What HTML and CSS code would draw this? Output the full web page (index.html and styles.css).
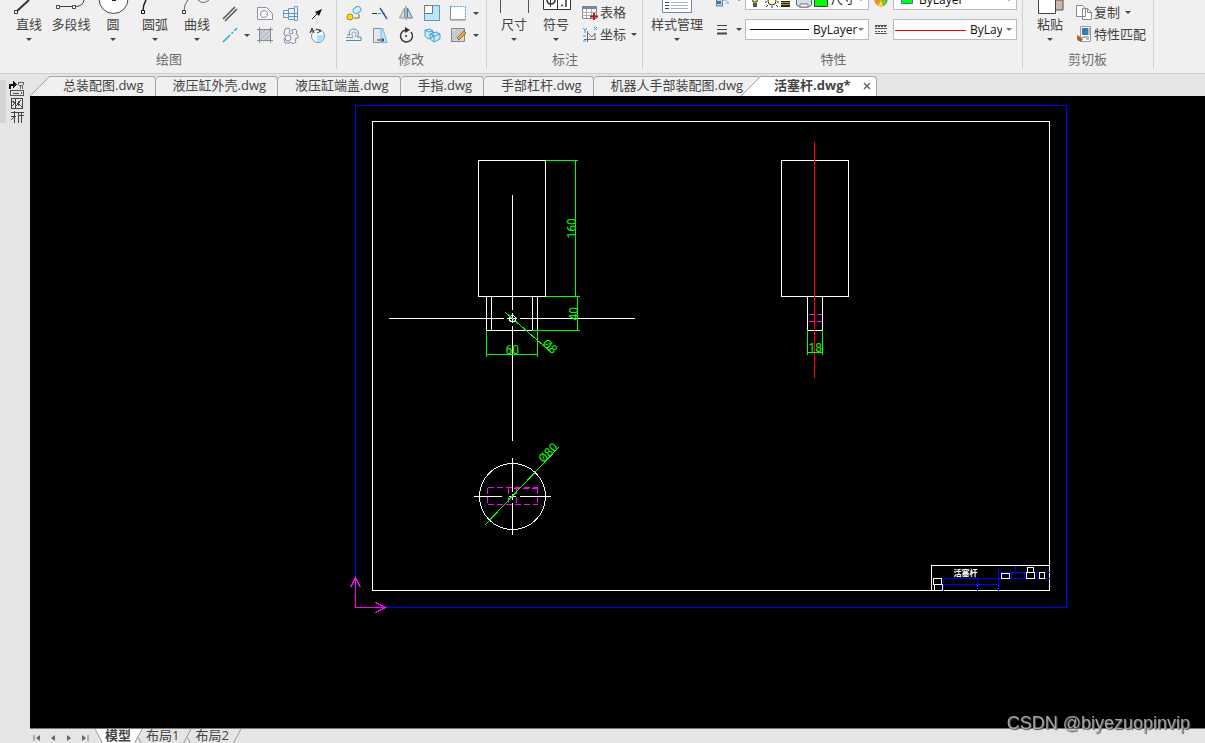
FILE: index.html
```html
<!DOCTYPE html>
<html lang="zh-CN">
<head>
  <meta charset="UTF-8" />
  <meta name="viewport" content="width=device-width, initial-scale=1.0"/>
  <title>活塞杆.dwg</title>
  <link rel="stylesheet" href="styles.css">
</head>
<body>
  <!-- Ribbon -->
  <header class="ribbon">
    <section class="group group-draw">
      <div class="tools">
        <button class="big">
          <svg width="42" height="14"><path d="M9 11L21 0" stroke="#334" stroke-width="2"/><path d="M6.500 10.500h3v3h-3z" fill="#fff" stroke="#333"/></svg>
          直线<i class="caret"></i>
        </button>
        <button class="big">
          <svg width="42" height="14" fill="none" stroke="#444"><path d="M8 6.500H26Q33 6 34 0"/><path d="M6.500 5.500h3v3h-3zM22.500 5.500h3v3h-3z" fill="#fff"/></svg>
          多段线
        </button>
        <button class="big">
          <svg width="42" height="14"><circle cx="21.500" cy="-1" r="14.500" fill="#fff" stroke="#444"/><path d="M20 0h4" stroke="#222" stroke-width="2"/></svg>
          圆<i class="caret"></i>
        </button>
        <button class="big">
          <svg width="42" height="14" fill="none"><path d="M9 11Q9 5 12 0" stroke="#222" stroke-width="1.500"/><path d="M7.500 10.500h3v3h-3z" fill="#fff" stroke="#111"/></svg>
          圆弧<i class="caret"></i>
        </button>
        <button class="big">
          <svg width="42" height="14" fill="none" stroke="#666"><path d="M8 11Q8 4 12 0M22 0Q27 5 33 0"/><path d="M6.500 10.500h3v3h-3z" fill="#fff" stroke="#333"/></svg>
          曲线<i class="caret"></i>
        </button>
        <div class="icons icons-draw">
          <button aria-label="双线"><svg width="18" height="18" stroke="#555" stroke-width="1.500"><path d="M2 15L14 3M4 17L16 5"/></svg></button>
          <span></span>
          <button aria-label="面域"><svg width="18" height="18" fill="#fafafa" stroke="#8a93a3"><path d="M1.500 3.500H10.500L16.500 9.500V15.500H1.500z"/><circle cx="8" cy="10" r="3.500"/></svg></button>
          <button aria-label="轴"><svg width="18" height="18" fill="#eaf5ff" stroke="#7894b2"><path d="M1.500 6.500h5v7h-5zM6.500 4.500h6v11h-6zM12.500 2.500h3v14h-3z"/><path d="M1 9.500h15M6 12.500h10" stroke="#3d9fe5"/></svg></button>
          <button aria-label="箭头"><svg width="18" height="18"><path d="M4 15L10 9" stroke="#222"/><path d="M7 8L14 5L11 12z" fill="#111"/></svg></button>
          <button aria-label="构造线"><svg width="18" height="18" stroke="#2ca6dd" stroke-width="1.500"><path d="M2 16L16 2" stroke-dasharray="10 2 2 2"/></svg></button>
          <i class="caret"></i>
          <button aria-label="填充"><svg width="18" height="18" fill="#ccd1d6" stroke="#8a8f94"><path d="M3 3h12v12H3z" stroke="none"/><path d="M3 15L15 3M3 10L10 3M8 15L15 8M3 6L6 3" stroke="#a4acb4"/><path d="M3.500 1v16M14.500 1v16M1 3.500h16M1 14.500h16" stroke="#889"/></svg></button>
          <button aria-label="齿轮"><svg width="18" height="18" fill="#eef0f5" stroke="#858d9d"><path d="M3 3l4-1 1 2-1 3 2 1 2-1-1-3 3-1 2 2-1 3 2 1v3l-3 1 1 3-3 2-2-2-2 1H3l-1-4 2-2-2-3z"/><circle cx="6" cy="12" r="3"/></svg></button>
          <button aria-label="区域"><svg width="18" height="18"><circle cx="10" cy="10" r="6.500" fill="#f8fbff" stroke="#7c8a9d"/><path d="M9 9h7.500a6.500 6.500 0 0 1-7.500 7z" fill="#afe0ff"/><path d="M2 7L4 2L6 7M3 5h3M8 3l5 2-4 2" fill="none" stroke="#333"/></svg></button>
        </div>
      </div>
      <h2>绘图</h2>
    </section>

    <section class="group group-modify">
      <div class="tools">
        <div class="icons icons-modify">
          <button aria-label="复制对象"><svg width="18" height="18"><rect x="8" y="3" width="8" height="6" rx="3" transform="rotate(-35 12 6)" fill="#d3edff" stroke="#51a3db"/><circle cx="5" cy="13" r="3" fill="#ffe000" stroke="#9c8b20"/><path d="M9 14h5v-4" fill="none" stroke="#a4502c"/></svg></button>
          <button aria-label="修剪"><svg width="18" height="18"><path d="M1 9.500h5" stroke="#333"/><path d="M7 9.500h8" stroke="#3194dd" stroke-dasharray="3 1"/><path d="M9 4L16 15" stroke="#2863a5" stroke-width="1.500"/></svg></button>
          <button aria-label="镜像"><svg width="18" height="18"><path d="M7.500 4v10h-5z" fill="#ddd" stroke="#999"/><path d="M10.500 4v10h5z" fill="#abdafb" stroke="#679"/><path d="M9 2v14" stroke="#777"/></svg></button>
          <button aria-label="缩放"><svg width="18" height="18"><path d="M1.500 1.500h15v15h-15z" fill="#b9e8fc" stroke="#6495b2"/><path d="M1.500 1.500h8v8h-8z" fill="#fff" stroke="#777"/></svg></button>
          <button aria-label="拉伸"><svg width="18" height="18"><path d="M1.500 2.500h15v13h-15z" fill="#fff" stroke="#58a2d8" stroke-dasharray="2 1"/><path d="M1.500 2v14h15" fill="none" stroke="#888"/></svg></button>
          <i class="caret"></i>
          <button aria-label="偏移"><svg width="18" height="18" fill="none"><path d="M1 14.500h15V11h-4c3-3 1-8-3-8s-6 3-4 6H2" stroke="#508bb5"/><path d="M1 11.500h7C6 8 7 6 9 6s3 2 1 5" stroke="#8198ae"/></svg></button>
          <button aria-label="倒角"><svg width="18" height="18"><path d="M2.500 2.500h8v14h-8z" fill="#e5e8ed" stroke="#87919d"/><path d="M10 2.500h2l4 14h-6z" fill="#b8e6ff" stroke="#7fb9da"/><path d="M6 14h7m-2-2l2 2-2 2" fill="none" stroke="#333"/></svg></button>
          <button aria-label="旋转"><svg width="18" height="18"><path d="M9 4a6 6 0 1 0 5 2" fill="none" stroke="#3d3d3d" stroke-width="1.500"/><path d="M8 1l5 3-5 3z" fill="#333"/><circle cx="9" cy="10" r="1" fill="#333"/></svg></button>
          <button aria-label="阵列"><svg width="18" height="18" fill="#c7ebff" stroke="#4b9bd0"><path d="M2 4l5-1 3 2v6l-5 2-3-3zM7 8l6-2 4 2v5l-6 3-4-3zM7 8l4 2 6-2M11 10v6M2 4l4 2 4-1"/></svg></button>
          <button aria-label="编辑填充"><svg width="18" height="18"><path d="M2.500 2.500h13v13h-13z" fill="#d5d8dd" stroke="#888"/><path d="M3 15L15 3M3 9L9 3M9 15L15 9M3 12L12 3" stroke="#a3abb5"/><path d="M8 12L15 5l2 2-7 7z" fill="#edaa3d" stroke="#9b6427"/></svg></button>
          <i class="caret"></i>
        </div>
      </div>
      <h2>修改</h2>
    </section>

    <section class="group group-note">
      <div class="tools">
        <button class="big">
          <svg width="42" height="14"><path d="M7.500 0v13M35.500 0v13" stroke="#555"/></svg>
          尺寸<i class="caret"></i>
        </button>
        <button class="big">
          <svg width="42" height="14" fill="none" stroke="#333"><path d="M8.500 0v9.500h27V0M22.500 0v9M15.500 0v7" fill="#fff"/><path d="M12 0q0 4 4 4t4-4M31 0v7M26 5.500h2" stroke-width="1.500"/></svg>
          符号<i class="caret"></i>
        </button>
        <div class="list">
          <button><svg width="18" height="18"><path d="M1.500 3.500h14v12h-14z" fill="#fff" stroke="#888"/><path d="M1 3h15v3H1z" fill="#76879b"/><path d="M1 9.500h14M1 12.500h14M5.500 6v9M10.500 6v9" stroke="#aaa"/><path d="M13 10v7M9 13.500h8" stroke="#b11a24" stroke-width="2"/></svg>表格</button>
          <button><svg width="18" height="18" fill="none"><path d="M6.500 6v11M3 14.500h12M7 8l4 4 3-4v7" stroke="#68717b"/><path d="M2 3l2 2 2-2M4 5v3M13 2l3 3M16 2l-3 3M2 11h3M2 16h3" stroke="#3996d7"/></svg>坐标<i class="caret"></i></button>
        </div>
      </div>
      <h2>标注</h2>
    </section>

    <section class="group group-props">
      <div class="tools">
        <button class="big wide">
          <svg width="42" height="14" fill="none"><path d="M6.500 0v12.500h29V0" fill="#fff" stroke="#7188a4"/><path d="M9 2.500h4M9 5.500h4M9 8.500h4" stroke="#444"/><path d="M15 2.500h17M15 5.500h17M15 8.500h17" stroke="#a6b6cf"/></svg>
          样式管理<i class="caret"></i>
        </button>
        <div class="props">
          <button class="prop" aria-label="图层"><svg width="18" height="21"><path d="M2.500 10v7h6v-7" fill="#c6d1dd" stroke="#65758a"/><path d="M3 12h4v3H3z" fill="#347cb5"/><path d="M8 13l3-2 4 3h-4" fill="#fff" stroke="#9aabbc"/></svg><i class="caret"></i></button>
          <div class="combo">
            <svg width="82" height="19">
              <path d="M6 6h6l-1 6H7z" fill="#ffe15c" stroke="#333"/><path d="M7 13h4v4H7z" fill="#555"/>
              <circle cx="26" cy="11" r="4" fill="#fffbcb" stroke="#333"/><path d="M19 12h2M31 12h2M22 15l-2 2M30 15l2 2M26 16v2" stroke="#333"/>
              <path d="M35 11h9v1h-9zM35 13h9v1h-9zM35 15h9v2h-9z" fill="#222"/><path d="M35 12h9v1h-9zM35 14h9v1h-9z" fill="#b3a42a"/>
              <path d="M50.500 9h15v6l-3 2h-9l-3-2z" fill="#d6dde5" stroke="#536474"/><path d="M54 14h8v3h-8z" fill="#fff" stroke="#777"/>
              <path d="M68.500 5.500h13v11h-13z" fill="#00ff00" stroke="#345"/>
            </svg>
            <select aria-label="当前图层"><option>尺寸</option></select><i class="caret"></i>
          </div>
          <button class="swatch" aria-label="颜色"><svg width="16" height="21"><circle cx="8" cy="11" r="6" fill="#77c934" stroke="#65806d"/><path d="M8 11L2 9a6 6 0 0 0 3 7z" fill="#ff8b20"/><path d="M8 11L5 17a6 6 0 0 0 5 0z" fill="#ffdc1d"/><path d="M8 11L5 5h6z" fill="#e9463c"/></svg></button>
          <div class="combo"><svg width="22" height="19"><path d="M7.500 3.500h11v10h-11z" fill="#00ff00" stroke="#2882d2"/></svg><select aria-label="颜色设置"><option>ByLayer</option></select><i class="caret"></i></div>

          <button class="prop" aria-label="线型"><svg width="18" height="21" stroke="#444"><path d="M3 6.500h10M3 10.500h10"/><path d="M3 14.500h10" stroke-width="2"/></svg><i class="caret"></i></button>
          <div class="combo"><svg width="64" height="19"><path d="M4 9.500h59" stroke="#111"/></svg><select aria-label="线型设置"><option>ByLayer</option></select><i class="caret"></i></div>
          <button class="swatch" aria-label="线宽"><svg width="16" height="21" stroke="#555"><path d="M2 6.500h12M2 9.500h12M2 14.500h12"/><path d="M2 7.500h12M2 12.500h12" stroke-dasharray="2 1"/></svg></button>
          <div class="combo"><svg width="73" height="19"><path d="M1 10.500h71" stroke="#f00"/></svg><select class="cut" aria-label="线宽设置"><option>ByLayer</option></select><i class="caret"></i></div>
        </div>
      </div>
      <h2>特性</h2>
    </section>

    <section class="group group-clip">
      <div class="tools">
        <button class="big">
          <svg width="42" height="14"><path d="M20 0h14v10H20z" fill="#c7b9ad" stroke="#555"/><path d="M9.500 -1h17v14.500h-17z" fill="#fff" stroke="#444"/></svg>
          粘贴<i class="caret"></i>
        </button>
        <div class="list">
          <button><svg width="18" height="18" fill="#fff" stroke="#8a8a8a"><path d="M1.500 2.500h6l3 3v8h-9zM7.500 5.500h5l4 4v7h-9z"/><path d="M12.500 5.500v4h4" fill="none"/></svg>复制<i class="caret"></i></button>
          <button><svg width="18" height="18"><path d="M5.500 1.500h10v15h-10z" fill="#fff" stroke="#999"/><path d="M7 3h6v7H7z" fill="#377caa"/><path d="M14 3v7M7 12h7M11 14h3" stroke="#678"/><path d="M2 10l6 3-1 3q-4 1-5-2z" fill="#a5622d"/><path d="M4 11l4 3" stroke="#e5b37c"/></svg>特性匹配</button>
        </div>
      </div>
      <h2>剪切板</h2>
    </section>
  </header>

  <div class="workspace">
    <aside class="sidebar">
      <div class="handle"></div>
      <button aria-label="工具面板">
        <svg width="16" height="44" fill="none" stroke="#444" shape-rendering="crispEdges">
          <path d="M1 9V5h4" stroke="#111" stroke-width="2"/><path d="M4 1l4 4-4 3z" fill="#111" stroke="none"/>
          <path d="M9.500 5V2.500h5V5M10 5.500h4M11.500 5v4M13.500 5v4" stroke="#666"/>
          <path d="M1.500 10.500h13v5h-13zM4 13.500h6M12.500 12v2" stroke="#555"/>
          <path d="M2.500 18.500h11v10h-11zM3 21l3 2-3 3M6.500 19v9M7 26l5-6M9 21v5M10 24l3 3"/>
          <path d="M2 32.500h13M2 36.500h5M9 35.500h6M5.500 31v12M9.500 33v10M12.500 32v11M2 40l3-3"/>
        </svg>
      </button>
    </aside>

    <main class="editor">
      <nav class="file-tabs">
        <button class="slanted">总装配图.dwg</button>
        <button>液压缸外壳.dwg</button>
        <button>液压缸端盖.dwg</button>
        <button>手指.dwg</button>
        <button>手部杠杆.dwg</button>
        <button class="before-active">机器人手部装配图.dwg</button>
        <button class="slanted active">活塞杆.dwg*<svg width="8" height="8"><path d="M1 1l6 6M7 1l-6 6" stroke="#666" stroke-width="1.500"/></svg></button>
      </nav>

      <svg class="drawing" width="100%" height="100%">
        <g class="sheet" transform="translate(-29.5 -95.5)">
          <!-- paper border -->
          <path class="blue" d="M355 105H1066V607H355z"/>

          <path class="white" d="M372 121H1049V590H372z"/>

          <!-- front view -->
          <path class="white" d="M478 160H545V296H478zM486 296V330H537V296M491 296V330M532 296V330"/>
          <path class="white" d="M512 195V309M512 313V322M512 326V440M389 318H503M507 318H516M520 318H634"/>
          <circle class="white" cx="512" cy="318" r="3"/>
          <path class="green" d="M546 160H577M575 160V296M546 296H579M577 296V330M532 330H579M486 331V356M537 331V356M486 354H537M505 312L551 352"/>
          <text transform="translate(575 238) rotate(-90)">160</text>
          <text transform="translate(577 320) rotate(-90)">40</text>
          <text x="505" y="353">60</text>
          <text transform="translate(541 344) rotate(42)">Ø8</text>

          <!-- side view -->
          <path class="white" d="M781 160H848V296H781zM807 296V330H822V296"/>
          <path class="red" d="M814 141V377"/>
          <path class="magenta" d="M808 314H813M816 314H821M808 321H813M816 321H821"/>
          <path class="green" d="M807 330V354M822 330V354M807 352H822"/>
          <text x="808" y="351">18</text>

          <!-- bottom view -->
          <circle class="white" cx="512" cy="496" r="33"/>
          <path class="magenta" stroke-dasharray="6 3" d="M487 487H537M487 504H537M487 487V504M537 487V504M508 487V504M516 487V504M513 488H537"/>
          <path class="white" d="M512 458V491M512 494V499M512 503V534M474 496H501M509 496H515M520 496H550"/>
          <path class="green" d="M485 524L558 447"/>
          <text transform="translate(543 463) rotate(-46)">Ø80</text>

          <!-- title block -->
          <path class="blue" d="M998 566V590M998 572H1049M943 578H1049M931 584H998M943 578V590M977 578V590M1015 565V572M1011 572V578M1024 572V578M1036 572V578"/>
          <path class="white" d="M931 590V565H1049M933 578H941V584H933zM934 584H942V590H934zM1001 573H1009V578H1001zM1027 567H1033V572H1027zM1026 572H1034V578H1026zM1039 572H1044V578H1039z"/>
          <text class="part-name" x="953" y="575">活塞杆</text>

          <!-- UCS icon -->
          <path class="magenta" d="M355 577V607H385M350 587L355 577L360 587M375 602L385 607L375 612"/>
        </g>
      </svg>

      <footer class="layout-bar">
        <button class="step" aria-label="第一个"><svg width="8" height="8"><path d="M1 1v6" stroke="#777"/><path d="M7 1v6L3 4z" fill="#666"/></svg></button>
        <button class="step" aria-label="上一个"><svg width="8" height="8"><path d="M6 1v6L2 4z" fill="#666"/></svg></button>
        <button class="step" aria-label="下一个"><svg width="8" height="8"><path d="M2 1v6l4-3z" fill="#666"/></svg></button>
        <button class="step" aria-label="最后一个"><svg width="8" height="8"><path d="M7 1v6" stroke="#777"/><path d="M1 1v6l4-3z" fill="#666"/></svg></button>
        <svg width="10" height="15"><path d="M1 0h9v15H9z" fill="#fff"/><path d="M1 0l8 15" stroke="#999"/></svg>
        <button class="layout active">模型</button>
        <svg width="12" height="15"><path d="M0 0h10L2 15H0z" fill="#fff"/><path d="M10 0L2 15M6 8l4 7" stroke="#999"/></svg>
        <button class="layout">布局1</button>
        <svg width="12" height="15"><path d="M10 0L2 15M6 8l4 7" stroke="#999"/></svg>
        <button class="layout">布局2</button>
        <svg width="12" height="15"><path d="M10 0L2 15" stroke="#999"/></svg>
      </footer>
    </main>
  </div>

  <!-- Watermark -->
  <div class="watermark">CSDN @biyezuopinvip</div>
</body>
</html>
```
FILE: styles.css
```css
* {
  box-sizing: border-box;
}

body {
  margin: 0;
  height: 100vh;
  overflow: hidden;
  display: flex;
  flex-direction: column;
  background: #e5e5e5;
  color: #444;
  font-family: "Open Sans", "Noto Sans CJK SC", sans-serif;
  font-size: 13px;
}

button {
  margin: 0;
  padding: 0;
  border: none;
  background: none;
  color: inherit;
  font: inherit;
  white-space: nowrap;
}

svg {
  display: block;
  flex: none;
}

.caret {
  width: 0;
  height: 0;
  flex: none;
  border: 3px solid transparent;
  border-top-color: #444;
  border-bottom: none;
}

/* Ribbon */
.ribbon {
  display: flex;
  flex: none;
  padding-bottom: 4px;
  background: #f0f0f0;
  border-bottom: 1px solid #ccc;
}

.group {
  display: flex;
  flex-direction: column;
  border-right: 1px solid #d0d0d0;
}

.group h2 {
  margin: 0;
  font-size: 13px;
  font-weight: 400;
  line-height: 20px;
  text-align: center;
  color: #6c6c6c;
}

.tools {
  display: flex;
  height: 49px;
}

.group-draw {
  padding: 0 6px 0 8px;
}

.group-modify {
  padding: 0 5px 0 4px;
}

.group-note {
  padding: 0 5px 0 6px;
}

.group-props {
  padding: 0 5px 0 7px;
}

.group-clip {
  padding: 0 7px 0 6px;
}

.big {
  width: 42px;
  display: flex;
  flex-direction: column;
  align-items: center;
  line-height: 20px;
}

.big .caret {
  margin-top: 4px;
}

.wide {
  width: 54px;
}

.icons {
  display: grid;
  grid-template-rows: 22px 22px;
  align-items: center;
  justify-items: center;
  padding-top: 2px;
  align-content: start;
}

.icons-draw {
  grid-template-columns: 24px 10px 26px 26px 26px;
}

.icons-modify {
  grid-template-columns: repeat(5, 26px) 10px;
}

.list {
  padding: 1px 0 0 4px;
}

.list button {
  display: flex;
  align-items: center;
  gap: 1px;
  height: 22px;
  line-height: 20px;
}

.list .caret {
  margin-left: 4px;
}

.props {
  display: grid;
  grid-template-columns: 41px 124px 24px 124px;
  grid-auto-rows: 21px;
  row-gap: 9px;
  margin-top: -11px;
}

.prop {
  display: flex;
  align-items: center;
  gap: 4px;
  padding-left: 10px;
}

.swatch {
  display: flex;
  justify-content: center;
}

.combo {
  display: flex;
  align-items: center;
  padding-right: 4px;
  background: #fff;
  border: 1px solid #bbb;
}

.combo select {
  appearance: none;
  flex: 1;
  min-width: 0;
  height: 19px;
  padding: 0 0 0 3px;
  border: none;
  background: none;
  color: #111;
  font-family: inherit;
  font-size: 12px;
}

.combo .cut {
  margin-right: 4px;
}

.combo .caret {
  border-top-color: #777;
}

/* Workspace */
.workspace {
  display: flex;
  flex: 1;
  min-height: 0;
}

.sidebar {
  display: flex;
  flex: none;
  align-items: flex-start;
  gap: 3px;
  width: 30px;
  padding-top: 6px;
}

.handle {
  width: 6px;
  height: 43px;
  background: #d4d4d4;
}

.editor {
  display: flex;
  flex: 1;
  flex-direction: column;
  min-width: 0;
}

.file-tabs {
  display: flex;
  flex: none;
  height: 22px;
  padding-top: 2px;
}

.file-tabs button {
  height: 20px;
  padding: 0 11px 2px 17px;
  line-height: 17px;
  background: #f0f0f0;
  border: 1px solid #a5a5a5;
  border-width: 1px 1px 0 0;
  border-radius: 4px 4px 0 0;
}

.file-tabs .slanted {
  position: relative;
  margin-left: 20px;
  padding-left: 13px;
  border-top-left-radius: 0;
}

.slanted::before {
  content: "";
  position: absolute;
  top: -1px;
  left: -20px;
  width: 20px;
  height: 20px;
  background: linear-gradient(to bottom right, transparent 48%, #a0a0a0 49%, #a0a0a0 51%, #f0f0f0 52%);
}

.file-tabs .before-active {
  padding-right: 18px;
  border-right: none;
}

.file-tabs .active {
  display: flex;
  align-items: center;
  gap: 12px;
  margin-left: 0;
  padding-right: 5px;
  background: #fff;
  font-weight: 700;
}

.active.slanted::before {
  background: linear-gradient(to bottom right, transparent 48%, #a0a0a0 49%, #a0a0a0 51%, #fff 52%);
}

.drawing {
  flex: 1;
  min-height: 0;
  background: #000;
}

.sheet {
  shape-rendering: crispEdges;
  fill: none;
}

.blue {
  stroke: #00f;
}

.white {
  stroke: #fff;
  stroke-linecap: square;
}

.green {
  stroke: #0f0;
  stroke-linecap: square;
}

.red {
  stroke: #f00;
}

.magenta {
  stroke: #f0f;
}

.sheet text {
  fill: #0f0;
  font-family: Roboto, sans-serif;
  font-size: 12px;
}

.sheet .part-name {
  fill: #fff;
  font-family: "Noto Sans CJK SC", sans-serif;
  font-size: 8px;
  font-weight: 700;
}

/* Layout tabs */
.layout-bar {
  display: flex;
  flex: none;
  height: 15px;
  border-top: 1px solid #777;
}

.step {
  display: flex;
  align-items: center;
  justify-content: center;
  width: 16px;
  padding: 3px 3px 0 0;
}

.layout {
  height: 14px;
  padding: 0 2px 2px;
  line-height: 12px;
}

.layout.active {
  background: #fff;
  padding: 0 1px 2px;
  font-weight: 700;
}

.watermark {
  position: fixed;
  right: 15px;
  bottom: 8px;
  color: rgba(180, 180, 180, 0.9);
  font-family: "Liberation Sans", sans-serif;
  font-size: 18px;
  line-height: 24px;
  text-shadow: 1px 1px 1px #555;
  pointer-events: none;
}
```
